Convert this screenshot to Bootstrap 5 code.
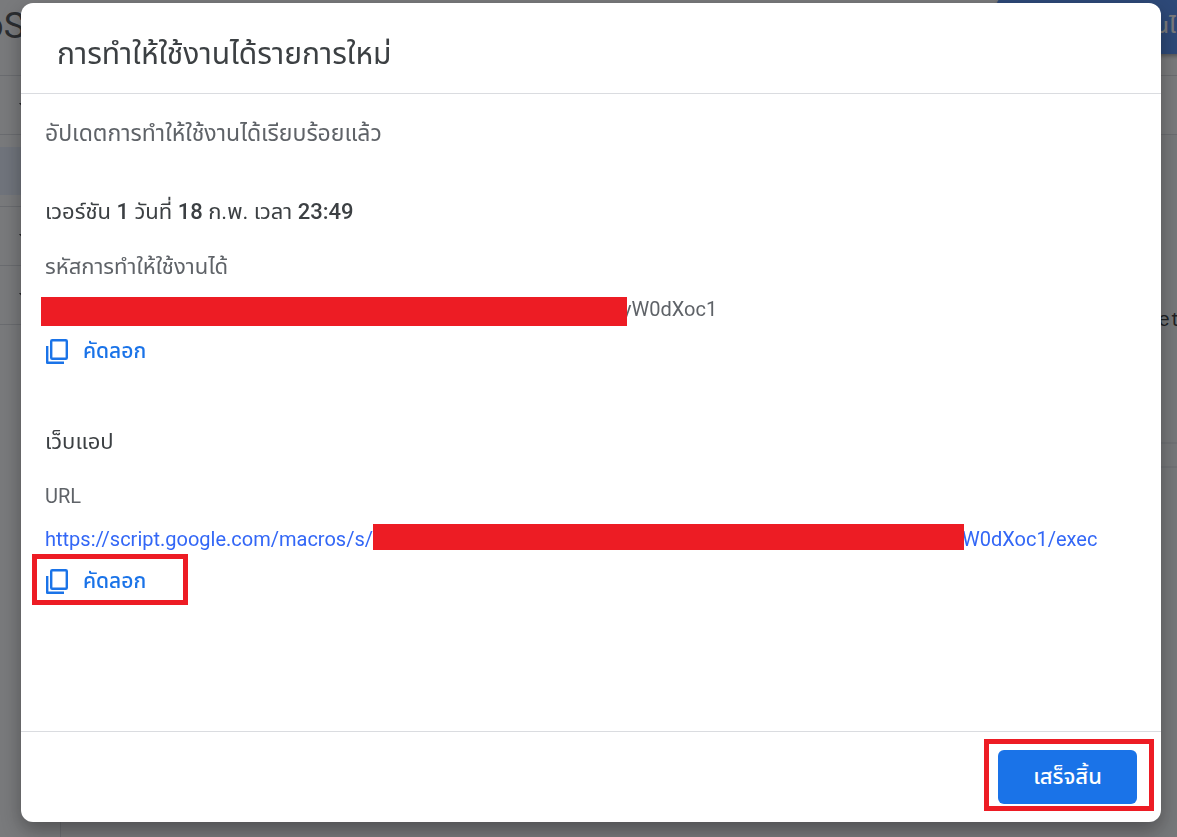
<!DOCTYPE html>
<html lang="th">
<head>
<meta charset="utf-8">
<meta name="viewport" content="width=device-width, initial-scale=1">
<title>การทำให้ใช้งานได้รายการใหม่</title>
<link href="https://cdn.jsdelivr.net/npm/bootstrap@5.3.0/dist/css/bootstrap.min.css" rel="stylesheet">
<style>
  body { font-family: Roboto, "Noto Sans Thai", "Noto Sans", sans-serif; font-size: 20px; line-height: 28px; color: #5f6368; overflow: hidden; }
  button { font-family: inherit; }
  .topbar { height: 76px; border-bottom: 1px solid #dadce0; }
  .project-name { font-size: 36px; line-height: 52px; color: #3c4043; width: 25px; }
  .deploy-btn { width: 200px; height: 56px; margin: -2px -20px 0 0; padding-right: 21px; background: #4285f4; color: #fff; border: 0; border-radius: 6px; box-shadow: 0 2px 4px #0006; font-size: 22px; font-weight: 500; }
  .side { width: 61px; border-right: 1px solid #dadce0; }
  .side-row { height: 59px; border-bottom: 1px solid #dadce0; padding: 2px 0 0 19px; }
  .side-file { height: 48px; margin: 12px 0 11px; background: #e8f0fe; }
  .side-rule { border-bottom: 1px solid #dadce0; }
  .tools { height: 59px; border-bottom: 1px solid #dadce0; }
  .editor { background: #f8f9fa; }
  .code-line { font: 20px/28px "Liberation Mono", monospace; color: #202124; padding: 172px 0 107px; margin-right: -5px; }
  .code-box { height: 26px; border: solid #e8eaed; border-width: 2px 0; }
  .scrim { background: rgba(32, 33, 36, .6); padding: 3px 16px 15px 21px; }
  .deploy-dialog { background: #fff; border-radius: 12px; box-shadow: 0 8px 20px #0005; }
  .dialog-head { padding: 33px 36px 21px; border-bottom: 1px solid #dadce0; }
  .dialog-title { font-size: 30px; line-height: 36px; font-weight: 400; color: #3c4043; }
  .dialog-main { padding: 26px 24px; }
  .dialog-foot { padding: 18px 24px; border-top: 1px solid #dadce0; }
  .status-text { font-size: 23px; }
  .section-title { font-size: 22px; line-height: 28px; font-weight: 400; color: #3c4043; margin-bottom: 27px; }
  .section-title strong { font-weight: 500; }
  .section-version { margin-top: 50px; }
  .section-web { margin-top: 63px; }
  .section-web .section-title { margin-bottom: 26px; }
  .field-name { margin-bottom: 14px; }
  .section-web .field-name { margin-bottom: 15px; }
  .field-name-thai { font-size: 22px; }
  .field-value { margin-bottom: 14px; height: 28px; white-space: nowrap; }
  .redacted { background: #ed1c24; position: relative; }
  .redacted-id { width: 586px; height: 29px; margin: 2px -5px 0 -4px; }
  .redacted-url { width: 591px; height: 26px; margin: -1px -2px 0 0; }
  .web-link { color: #3367f6; text-decoration: none; }
  .copy-btn { color: #1a73e8; background: none; border: 0; padding: 0; gap: 14px; height: 28px; font-size: 21px; font-weight: 500; }
  .done-btn { width: 139px; height: 54px; border-radius: 6px; background: #1a73e8; color: #fff; border: 0; font-size: 22px; font-weight: 500; }
  .callout::after { content: ""; position: absolute; border: 5px solid #ed1c24; pointer-events: none; }
  .callout-copy::after { inset: -13px -42px -10px -13px; }
  .callout-done::after { inset: -11px -17px -7px -14px; }
</style>
</head>
<body>
<div class="vh-100 d-flex flex-column">
  <header class="topbar d-flex justify-content-between align-items-start flex-shrink-0">
    <div class="project-name d-flex justify-content-end">oS</div>
    <button class="deploy-btn text-end" type="button">นไ</button>
  </header>
  <div class="d-flex flex-fill">
    <aside class="side flex-shrink-0">
      <div class="side-row d-flex align-items-center"><svg width="10" height="6"><path d="M0 0h10L5 6z" fill="#202124"/></svg></div>
      <div class="side-file"></div>
      <div class="side-rule"></div>
      <div class="side-row d-flex align-items-center"><svg width="10" height="6"><path d="M0 0h10L5 6z" fill="#202124"/></svg></div>
      <div class="side-row d-flex align-items-center"><svg width="10" height="6"><path d="M0 0h10L5 6z" fill="#202124"/></svg></div>
    </aside>
    <main class="flex-fill d-flex flex-column">
      <div class="tools"></div>
      <div class="editor flex-fill">
        <div class="code-line text-end">et</div>
        <div class="code-box"></div>
      </div>
    </main>
  </div>
</div>

<div class="scrim position-fixed top-0 start-0 w-100 h-100 d-flex">
  <section class="deploy-dialog flex-fill d-flex flex-column" role="dialog" aria-modal="true" aria-labelledby="dialogTitle">
    <div class="dialog-head"><h1 class="dialog-title m-0" id="dialogTitle">การทำให้ใช้งานได้รายการใหม่</h1></div>
    <div class="dialog-main flex-fill">
      <p class="status-text m-0">อัปเดตการทำให้ใช้งานได้เรียบร้อยแล้ว</p>
      <div class="section-version">
        <h2 class="section-title">เวอร์ชัน <strong>1</strong> วันที่ <strong>18</strong> ก.พ. เวลา <strong>23:49</strong></h2>
        <div class="field-name field-name-thai">รหัสการทำให้ใช้งานได้</div>
        <div class="field-value d-flex"><span class="redacted redacted-id"></span><span>yW0dXoc1</span></div>
        <button class="copy-btn d-flex align-items-center" type="button">
          <svg width="24" height="26" viewBox="0 0 24 26" fill="none" stroke="#1a73e8" stroke-width="2.4" stroke-linejoin="round"><rect x="6.2" y="2.2" width="15.6" height="18.6" rx="1"/><path d="M2.2 8v16.8H19"/></svg>
          <span>คัดลอก</span>
        </button>
      </div>
      <div class="section-web">
        <h2 class="section-title">เว็บแอป</h2>
        <div class="field-name">URL</div>
        <div class="field-value"><a class="web-link d-flex" href="#">https://script.google.com/macros/s/<span class="redacted redacted-url"></span>W0dXoc1/exec</a></div>
        <span class="callout callout-copy position-relative d-inline-flex">
          <button class="copy-btn d-flex align-items-center" type="button">
            <svg width="24" height="26" viewBox="0 0 24 26" fill="none" stroke="#1a73e8" stroke-width="2.4" stroke-linejoin="round"><rect x="6.2" y="2.2" width="15.6" height="18.6" rx="1"/><path d="M2.2 8v16.8H19"/></svg>
            <span>คัดลอก</span>
          </button>
        </span>
      </div>
    </div>
    <div class="dialog-foot d-flex justify-content-end">
      <span class="callout callout-done position-relative d-inline-flex"><button class="done-btn" type="button">เสร็จสิ้น</button></span>
    </div>
  </section>
</div>
<script src="https://cdn.jsdelivr.net/npm/bootstrap@5.3.0/dist/js/bootstrap.bundle.min.js"></script>
</body>
</html>
